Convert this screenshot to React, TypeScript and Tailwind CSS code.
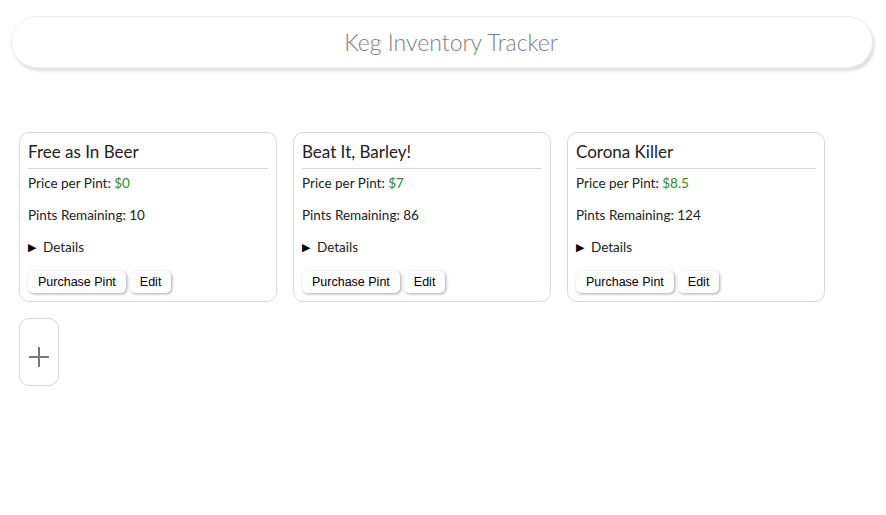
import { useState } from "react";

type Keg = { name: string; price: string; pints: number };

const kegs: Keg[] = [
  { name: "Free as In Beer", price: "$0", pints: 10 },
  { name: "Beat It, Barley!", price: "$7", pints: 86 },
  { name: "Corona Killer", price: "$8.5", pints: 124 },
];

function KegCard({ keg }: { keg: Keg }) {
  const [open, setOpen] = useState(false);
  return (
    <div className="w-[258px] h-[170px] rounded-[10px] border border-[#d9d9d9] bg-white px-2 pt-2">
      <h3 className="text-[17px] leading-[21px] text-[#222] pb-[6px] border-b border-[#d6d6d6]">
        {keg.name}
      </h3>
      <p className="mt-[6px] text-[13.5px] leading-[16px] text-[#222]">
        Price per Pint: <span className="text-[#2e8b2e]">{keg.price}</span>
      </p>
      <p className="mt-4 text-[13.5px] leading-[16px] text-[#222]">Pints Remaining: {keg.pints}</p>
      <button
        className="mt-4 flex items-center gap-[7px] text-[13.5px] leading-[16px] text-[#222]"
        onClick={() => setOpen(!open)}
      >
        <span className="text-[11px] text-black">{open ? "▼" : "▶"}</span>
        Details
      </button>
      <div className="mt-[16px] flex gap-[4px] font-['Liberation_Sans',sans-serif]">
        <button className="h-[22px] rounded-[5px] bg-white px-[10px] text-[12.5px] text-black shadow-[1px_1px_3px_rgba(0,0,0,0.35)]">
          Purchase Pint
        </button>
        <button className="h-[22px] rounded-[5px] bg-white px-[10px] text-[12.5px] text-black shadow-[1px_1px_3px_rgba(0,0,0,0.35)]">
          Edit
        </button>
      </div>
    </div>
  );
}

export default function App() {
  return (
    <div className="min-h-[515px] bg-white font-['Lato',sans-serif] pt-4">
      <header className="mx-[11px] w-[862px] h-[52px] flex items-center justify-center rounded-[26px] border border-[#eeeeee] bg-white pl-[18px] shadow-[2px_3px_3px_rgba(0,0,0,0.12)]">
        <h1 className="text-[23px] text-[#808080] font-light">Keg Inventory Tracker</h1>
      </header>
      <div className="mt-[64px] ml-[19px] flex gap-[16px]">
        {kegs.map((k) => (
          <KegCard key={k.name} keg={k} />
        ))}
      </div>
      <button className="mt-[16px] ml-[19px] w-[40px] h-[68px] rounded-[10px] border border-[#d9d9d9] bg-white flex items-center justify-center pt-[10px]">
        <svg width="20" height="20" viewBox="0 0 20 20">
          <path d="M10 0v20M0 10h20" stroke="#777" strokeWidth="2" />
        </svg>
      </button>
    </div>
  );
}
